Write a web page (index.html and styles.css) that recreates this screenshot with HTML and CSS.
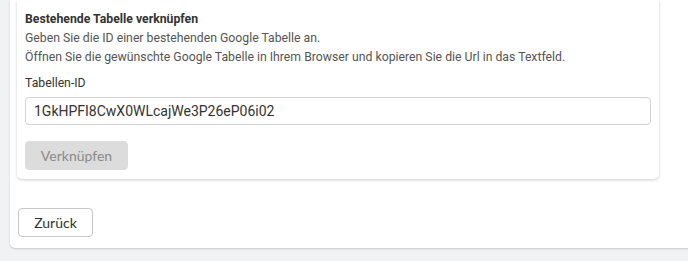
FILE: index.html
```html
<!DOCTYPE html>
<html lang="de">
<head>
<meta charset="utf-8">
<link rel="stylesheet" href="styles.css">
</head>
<body>
<div class="panel">
  <section class="card">
    <h3 class="title">Bestehende Tabelle verknüpfen</h3>
    <p class="desc">Geben Sie die ID einer bestehenden Google Tabelle an.</p>
    <p class="desc">Öffnen Sie die gewünschte Google Tabelle in Ihrem Browser und kopieren Sie die Url in das Textfeld.</p>
    <label class="label" for="tid">Tabellen-ID</label>
    <input class="input" id="tid" type="text" value="1GkHPFI8CwX0WLcajWe3P26eP06i02">
    <button class="btn btn-disabled" disabled>Verknüpfen</button>
  </section>
  <div class="footer">
    <button class="btn btn-back">Zurück</button>
  </div>
</div>
</body>
</html>
```
FILE: styles.css
```css
html, body {
  margin: 0;
  padding: 0;
  overflow: hidden;
}
body {
  background: #f1f2f3;
  width: 688px;
  height: 261px;
  font-family: Roboto, "Liberation Sans", sans-serif;
  color: #333;
}
.panel {
  margin-left: 10px;
  width: 700px;
  background: #fff;
  border-radius: 0 0 0 5px;
  box-shadow: 0 1px 2px rgba(0,0,0,0.18);
  padding: 0 0 11px 0;
  box-sizing: border-box;
}
.card {
  margin-left: 7px;
  width: 642px;
  box-sizing: border-box;
  background: #fff;
  border-radius: 0 0 5px 5px;
  box-shadow: 0 1px 3px rgba(0,0,0,0.2);
  padding: 11px 8px 9px 8px;
  display: flex;
  flex-direction: column;
  align-items: flex-start;
}
.title {
  margin: 0;
  font-size: 12.25px;
  font-weight: 700;
  line-height: 16px;
  color: #333;
}
.desc {
  margin: 0;
  font-size: 12.25px;
  line-height: 18.5px;
  color: #555;
}
.title + .desc { margin-top: 2px; }
.label {
  margin-top: 9px;
  font-size: 12.25px;
  line-height: 16px;
  color: #333;
}
.input {
  margin-top: 6px;
  width: 626px;
  height: 28px;
  box-sizing: border-box;
  border: 1px solid #d2d2d2;
  border-radius: 4px;
  padding: 0 8px;
  font-family: Roboto, "Liberation Sans", sans-serif;
  font-size: 14px;
  color: #333;
  background: #fff;
  outline: none;
}
.btn {
  font-family: Lato, "Liberation Sans", sans-serif;
  font-size: 14px;
  height: 29px;
  border-radius: 4px;
  box-sizing: border-box;
  cursor: pointer;
}
.btn-disabled {
  margin-top: 16px;
  width: 103px;
  background: #dcdcdc;
  border: 1px solid #dcdcdc;
  color: #8a8a8a;
}
.footer {
  padding: 29px 0 0 8px;
}
.btn-back {
  width: 75px;
  background: #fff;
  border: 1px solid #c8c8c8;
  color: #333;
}
```
